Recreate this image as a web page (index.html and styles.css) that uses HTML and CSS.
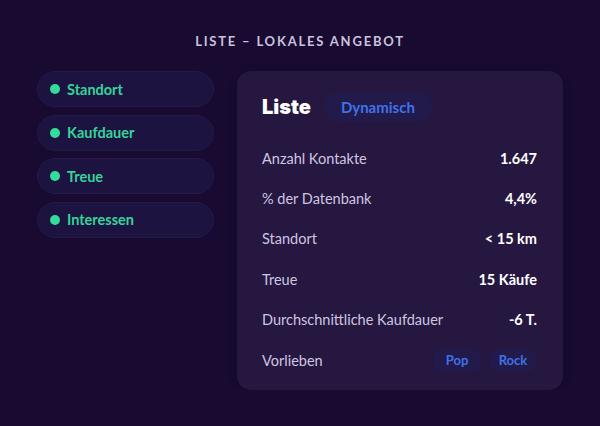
FILE: index.html
```html
<!DOCTYPE html>
<html lang="de">
<head>
    <meta charset="UTF-8">
    <meta name="viewport" content="width=device-width, initial-scale=1.0">
    <title>Liste – Lokales Angebot</title>
    <link rel="stylesheet" href="styles.css">
</head>
<body>
    <h1 class="pageTitle">LISTE – LOKALES ANGEBOT</h1>

    <div class="layout">
        <ul class="filters">
            <li class="filter"><span class="dot"></span>Standort</li>
            <li class="filter"><span class="dot"></span>Kaufdauer</li>
            <li class="filter"><span class="dot"></span>Treue</li>
            <li class="filter"><span class="dot"></span>Interessen</li>
        </ul>

        <div class="card">
            <div class="cardHead">
                <h2>Liste</h2>
                <span class="tag tagBig">Dynamisch</span>
            </div>
            <div class="row"><span class="label">Anzahl Kontakte</span><span class="value">1.647</span></div>
            <div class="row"><span class="label">% der Datenbank</span><span class="value">4,4%</span></div>
            <div class="row"><span class="label">Standort</span><span class="value">&lt; 15 km</span></div>
            <div class="row"><span class="label">Treue</span><span class="value">15 Käufe</span></div>
            <div class="row"><span class="label">Durchschnittliche Kaufdauer</span><span class="value">-6 T.</span></div>
            <div class="row">
                <span class="label">Vorlieben</span>
                <span class="tags">
                    <span class="tag">Pop</span>
                    <span class="tag">Rock</span>
                </span>
            </div>
        </div>
    </div>
</body>
</html>
```

FILE: styles.css
```css
body {
    background-color: #180a31;
    margin: 0;
    padding: 0;
    font-family: "Lato", "Noto Sans", sans-serif;
    color: #fff;
}

.pageTitle {
    margin: 33px 0 0;
    text-align: center;
    font-size: 13px;
    font-weight: 700;
    letter-spacing: 1.8px;
    color: #cbc2de;
    line-height: 16px;
}

.layout {
    display: flex;
    gap: 23px;
    padding: 22px 37px 0;
    align-items: flex-start;
}

.filters {
    list-style: none;
    margin: 0;
    padding: 0;
    width: 177px;
    display: flex;
    flex-direction: column;
    gap: 7.5px;
}

.filter {
    height: 36px;
    box-sizing: border-box;
    border-radius: 18px;
    background-color: #1d1340;
    border: 1px solid #231a48;
    display: flex;
    align-items: center;
    padding-left: 12px;
    gap: 7px;
    color: #35d49b;
    font-weight: 700;
    font-size: 14.5px;
}

.dot {
    width: 10px;
    height: 10px;
    border-radius: 50%;
    background-color: #33dc9c;
}

.card {
    flex: 1;
    background-color: #25173f;
    border-radius: 14px;
    padding: 21px 26px 10px 25px;
    box-shadow: 0 0 10px rgba(0, 0, 0, 0.15);
}

.cardHead {
    display: flex;
    align-items: center;
    gap: 13px;
    margin-bottom: 16px;
}

.cardHead h2 {
    margin: 0;
    font-family: "Inter", "Lato", sans-serif;
    font-size: 20px;
    font-weight: 900;
    color: #fff;
}

.tag {
    background-color: #221a4a;
    color: #3f72e6;
    font-weight: 700;
    font-size: 13px;
    border-radius: 12px;
    width: 48px;
    height: 23px;
    display: flex;
    align-items: center;
    justify-content: center;
}

.tagBig {
    width: auto;
    height: 30px;
    font-size: 15px;
    padding: 0 17px;
    border-radius: 15px;
}

.tags {
    display: flex;
    gap: 8px;
}

.row {
    display: flex;
    justify-content: space-between;
    align-items: center;
    height: 40.4px;
    font-size: 14.5px;
}

.label {
    color: #cfc5e2;
}

.value {
    font-weight: 700;
    color: #fff;
}
```
